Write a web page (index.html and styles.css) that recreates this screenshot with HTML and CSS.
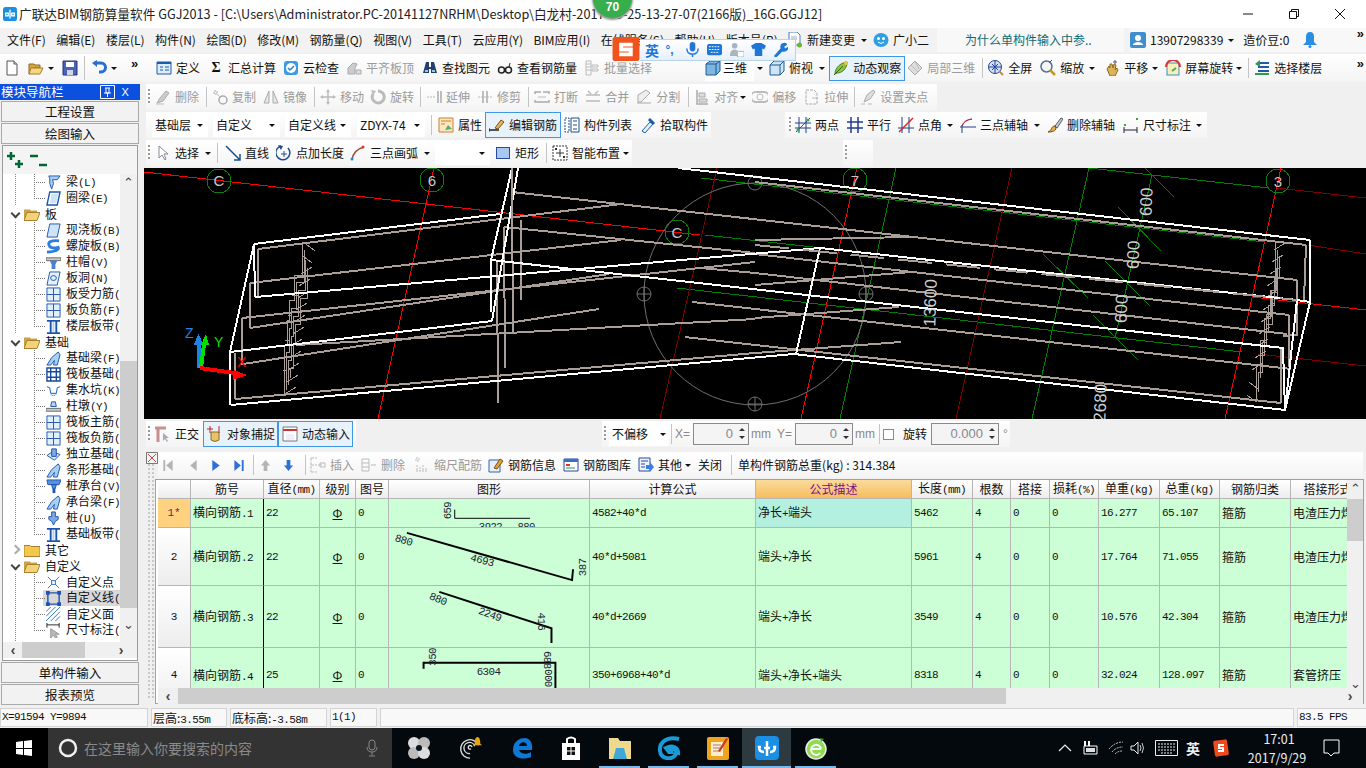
FILE: index.html
```html
<!DOCTYPE html>
<html lang="zh">
<head>
<meta charset="utf-8">
<title>广联达BIM钢筋算量软件 GGJ2013</title>
<link rel="stylesheet" href="styles.css">
</head>
<body>
<svg class="defs">
<symbol id="new" viewBox="0 0 16 16"><path d="M3 1h7l3 3v11H3z" fill="#fff" stroke="#555"/><path d="M10 1v3h3" fill="#ddd" stroke="#555"/></symbol>
<symbol id="open" viewBox="0 0 16 16"><path d="M1 4h5l1 1h5v3H5L2 14H1z" fill="#d9a441" stroke="#8a6a20"/><path d="M3 8h12l-3 6H1z" fill="#f6d77c" stroke="#a57f2a"/></symbol>
<symbol id="save" viewBox="0 0 16 16"><path d="M1 1h14v14H1z" fill="#4a63b8" stroke="#24357f"/><path d="M4 2h8v5H4z" fill="#fff"/><path d="M5 10h6v5H5z" fill="#cfd6e8"/></symbol>
<symbol id="undo" viewBox="0 0 16 16"><path d="M3 3h7a4 4 0 0 1 0 9H8" fill="none" stroke="#2a6fd0" stroke-width="3"/><path d="M6 0v7L1 3z" fill="#2a6fd0"/></symbol>
<symbol id="def" viewBox="0 0 16 16"><path d="M1 2h14v12H1z" fill="#dcecf9" stroke="#1d5ca8"/><path d="M1 2h14v2H1z" fill="#1d5ca8"/><path d="M4 7h3M4 10h3M9 7h4M9 10h4" stroke="#1d5ca8"/></symbol>
<symbol id="cloud" viewBox="0 0 16 16"><rect x="1" y="1" width="14" height="14" rx="3" fill="#3d9be6"/><circle cx="8" cy="8" r="5" fill="#fff"/><path d="M5 8l2 2 4-4" fill="none" stroke="#2a7fc8" stroke-width="1.5"/></symbol>
<symbol id="flat" viewBox="0 0 16 16"><path d="M2 14V8l5-5 4 1-2 4v6z" fill="#ccc" stroke="#aaa"/><path d="M10 10h5v4h-5z" fill="#ddd" stroke="#aaa"/></symbol>
<symbol id="binoc" viewBox="0 0 16 16"><path d="M4 2h3v5h2V2h3l3 11H9V9H7v4H1z" fill="#24406f"/><path d="M3 10h3v2H3zM10 10h3v2h-3z" fill="#9cc"/></symbol>
<symbol id="glass" viewBox="0 0 16 16"><circle cx="4.500" cy="10" r="3" fill="none" stroke="#222" stroke-width="1.500"/><circle cx="11.500" cy="10" r="3" fill="none" stroke="#222" stroke-width="1.500"/><path d="M12 7l1-4" stroke="#222"/></symbol>
<symbol id="batch" viewBox="0 0 16 16"><path d="M2 1h5v14H2zM8 5h6v2H8zM8 9h6v2H8zM2 4h5M2 7h5M2 10h5" fill="none" stroke="#bbb"/></symbol>
<symbol id="cube" viewBox="0 0 16 16"><path d="M1 4l4-3h10v10l-4 4H1z" fill="#7fb5e0" stroke="#1b5a93"/><path d="M1 4h10v11M11 4l4-3" fill="none" stroke="#1b5a93"/></symbol>
<symbol id="top" viewBox="0 0 16 16"><path d="M1 5l4-4h10v10l-4 4H1z" fill="#cfe3f4" stroke="#1b5a93"/><path d="M1 5h10v10M11 5l4-4" fill="none" stroke="#1b5a93"/></symbol>
<symbol id="orbit" viewBox="0 0 16 16"><path d="M2 14C2 8 7 3 14 2c0 7-5 11-10 11z" fill="#8cc63f" stroke="#4c7f1b"/><circle cx="13" cy="3" r="2" fill="#e6c33c"/><path d="M1 15l9-9" stroke="#2f5f10"/></symbol>
<symbol id="local" viewBox="0 0 16 16"><path d="M1 8l7-7 7 7-7 7z" fill="#ddd" stroke="#aaa"/><path d="M4 5l7 7M8 1l4 8" stroke="#bbb"/></symbol>
<symbol id="globe" viewBox="0 0 16 16"><circle cx="7" cy="7" r="6.500" fill="#d4e2f7" stroke="#23419a"/><path d="M7 1v12M1 7h12M4 4l6 6M10 4l-6 6" stroke="#23419a" fill="none"/><path d="M11 11l4 4" stroke="#d08a1c" stroke-width="2"/></symbol>
<symbol id="zoomi" viewBox="0 0 16 16"><circle cx="6.500" cy="6.500" r="5.500" fill="#f3f7fb" stroke="#5a6f85" stroke-width="1.500"/><path d="M10 10l5 5" stroke="#c59a1a" stroke-width="2.500"/><path d="M9 3l3-3" stroke="#456"/></symbol>
<symbol id="hand" viewBox="0 0 16 16"><path d="M3 9l2-3 1 2V4l2 0 1 4 1-4 2 1-1 5 2-2 1 2-3 6H6z" fill="#dcb35a" stroke="#8a6a20"/><path d="M11 0v4M9 2h4" stroke="#4a5f90"/></symbol>
<symbol id="rot" viewBox="0 0 16 16"><rect x="2" y="3" width="12" height="12" fill="#f6f0c0" stroke="#3a8fc0"/><path d="M1 7a7 7 0 0 1 14 0" fill="none" stroke="#d33" stroke-width="2"/><path d="M7 11l4-3" stroke="#5a5" stroke-width="2"/></symbol>
<symbol id="floor" viewBox="0 0 16 16"><path d="M4 3h11M4 7h11M4 11h11" stroke="#1d5ca8" stroke-width="2"/><path d="M1 14h14" stroke="#2a9d48" stroke-width="2"/><path d="M6 0L1 4l5 3z" fill="#2a9d48"/></symbol>
<symbol id="doc" viewBox="0 0 16 16"><path d="M2 0h8l3 3v10H2z" fill="#fff" stroke="#4a7fc0"/><path d="M4 5h6M4 7h6M4 9h4" stroke="#9ab"/><circle cx="12.500" cy="13" r="2.500" fill="#6cb52d"/></symbol>
<symbol id="bot" viewBox="0 0 16 16"><ellipse cx="8" cy="8" rx="7.500" ry="7" fill="#2f9fe3"/><circle cx="5.500" cy="6.500" r="1.500" fill="#fff"/><circle cx="10.500" cy="6.500" r="1.500" fill="#fff"/><path d="M5 10q3 3 6 0" stroke="#fff" fill="none"/></symbol>
<symbol id="user" viewBox="0 0 16 16"><rect width="16" height="16" rx="2" fill="#3f8fd0"/><circle cx="8" cy="6" r="3" fill="#fff"/><path d="M3 13h10v-1q-5-4-10 0z" fill="#fff"/></symbol>
<symbol id="bell" viewBox="0 0 16 16"><path d="M8 0q4 0 4 5l0 5 3 3H1l3-3V5q0-5 4-5z" fill="#2a8fe3"/><circle cx="8" cy="14.500" r="1.500" fill="#2a8fe3"/></symbol>
<symbol id="del" viewBox="0 0 16 16"><path d="M2 14l3-5 6-7 3 2-6 8z" fill="#ccc" stroke="#aaa"/><path d="M1 15h8" stroke="#bbb"/></symbol>
<symbol id="copy" viewBox="0 0 16 16"><path d="M2 2h3v3H2z" fill="none" stroke="#aaa" stroke-dasharray="2 1"/><circle cx="11" cy="11" r="4" fill="none" stroke="#aaa" stroke-width="1.500"/><path d="M5 5l4 4" stroke="#bbb"/></symbol>
<symbol id="mirror" viewBox="0 0 16 16"><path d="M1 14L6 2v12zM15 14L10 2v12z" fill="#e8e8e8" stroke="#aaa"/></symbol>
<symbol id="move" viewBox="0 0 16 16"><path d="M8 0l2 3H6zM8 16l-2-3h4zM0 8l3-2v4zM16 8l-3 2V6z" fill="#bbb"/><path d="M8 3v10M3 8h10" stroke="#bbb" stroke-width="1.500"/></symbol>
<symbol id="spin" viewBox="0 0 16 16"><path d="M8 2a6 6 0 1 1-5 3" fill="none" stroke="#bbb" stroke-width="3"/><path d="M1 1l5 1-3 4z" fill="#bbb"/></symbol>
<symbol id="extend" viewBox="0 0 16 16"><path d="M1 8h9" stroke="#bbb" stroke-dasharray="2 1"/><path d="M12 2v12M15 2v12" stroke="#aaa" stroke-width="1.500"/></symbol>
<symbol id="trim" viewBox="0 0 16 16"><path d="M1 8h14" stroke="#bbb" stroke-dasharray="2 1"/><path d="M6 2v12M10 2v12" stroke="#aaa" stroke-width="1.500"/></symbol>
<symbol id="brk" viewBox="0 0 16 16"><path d="M1 5v-2h6M15 5v-2H9M1 11v2h14v-2" fill="none" stroke="#aaa" stroke-width="1.500"/><path d="M4 8h8" stroke="#bbb"/></symbol>
<symbol id="merge" viewBox="0 0 16 16"><path d="M1 6h14M1 12h14M3 2l3 3M13 2l-3 3" fill="none" stroke="#bbb" stroke-width="1.500"/></symbol>
<symbol id="split" viewBox="0 0 16 16"><path d="M1 14h14M2 13V6l8-5 4 3-9 9z" fill="#eee" stroke="#aaa"/></symbol>
<symbol id="align" viewBox="0 0 16 16"><path d="M3 1v14h11" fill="none" stroke="#aaa" stroke-width="1.500"/><path d="M5 4h6v4H5zM5 10h8v3H5z" fill="#ddd" stroke="#aaa"/></symbol>
<symbol id="offset" viewBox="0 0 16 16"><path d="M3 13a5 5 0 0 1 2-10h6a5 5 0 0 1 2 10z" fill="none" stroke="#bbb" stroke-width="2"/><circle cx="8" cy="8" r="3" fill="none" stroke="#bbb"/></symbol>
<symbol id="stretch" viewBox="0 0 16 16"><path d="M2 1h8l3 3v11H2z" fill="#fafafa" stroke="#aaa" stroke-dasharray="3 1"/><path d="M8 9h6" stroke="#bbb"/></symbol>
<symbol id="grip" viewBox="0 0 16 16"><path d="M1 15h4M8 15h4" stroke="#bbb"/><path d="M4 13l3-7 6-5 2 2-5 7z" fill="#ddd" stroke="#aaa"/></symbol>
<symbol id="prop" viewBox="0 0 16 16"><path d="M1 1h14v14H1z" fill="#fde6c2" stroke="#c9822a"/><path d="M3 4h10M3 7h4" stroke="#c9822a"/><path d="M7 13l3-5 4 4z" fill="#5a7"/></symbol>
<symbol id="edit" viewBox="0 0 16 16"><path d="M0 13h10" stroke="#222" stroke-width="1.500"/><path d="M6 11l6-8 3 2-6 7z" fill="#e3b45a" stroke="#7a5210"/><path d="M0 11v4" stroke="#222"/></symbol>
<symbol id="list" viewBox="0 0 16 16"><path d="M1 1h4v14H1z" fill="#fff" stroke="#1d4f8f" stroke-dasharray="2 1"/><path d="M7 1h8v14H7z" fill="#fff" stroke="#1d4f8f"/><path d="M9 4h4M9 8h4M9 12h4" stroke="#1d4f8f"/></symbol>
<symbol id="pick" viewBox="0 0 16 16"><path d="M2 14l8-9 3 2-8 9z" fill="#e6eef8" stroke="#1d5ca8"/><path d="M9 2l5 5" stroke="#1d5ca8" stroke-width="3"/></symbol>
<symbol id="twopt" viewBox="0 0 16 16"><path d="M4 0v16M11 0v16M0 6h16M0 11h16" stroke="#223c8f"/><path d="M1 15L15 1" stroke="#b22"/><circle cx="3" cy="13" r="1.500" fill="#3a3"/><circle cx="13" cy="3" r="1.500" fill="#3a3"/></symbol>
<symbol id="para" viewBox="0 0 16 16"><path d="M4 0v16M11 0v16M0 5h16M0 11h16" stroke="#223c8f" stroke-width="1.500"/></symbol>
<symbol id="ang" viewBox="0 0 16 16"><path d="M4 0v16M11 0v16M0 11h16" stroke="#223c8f"/><path d="M1 15L15 1" stroke="#d22" stroke-width="1.500"/></symbol>
<symbol id="arc3" viewBox="0 0 16 16"><path d="M2 16V8M0 10h16M2 9q2-6 10-7" fill="none" stroke="#223c8f"/><path d="M2 9q2-6 10-7" fill="none" stroke="#d22"/></symbol>
<symbol id="erase" viewBox="0 0 16 16"><path d="M1 15c4-1 3-6 7-6l1 2c0 3-4 4-8 4z" fill="#e6b04a" stroke="#6a4a10"/><path d="M8 9l6-8 2 1-6 9z" fill="#c5cfdc" stroke="#556"/></symbol>
<symbol id="dim" viewBox="0 0 16 16"><path d="M1 10v6M14 10v6M1 13h13" stroke="#223" fill="none"/><path d="M1 7h2v2H1zM13 1h2v2h-2z" fill="#3a3"/></symbol>
<symbol id="sel" viewBox="0 0 16 16"><path d="M4 1v12l3-3 3 5 1-1-2-5h4z" fill="#fff" stroke="#889"/></symbol>
<symbol id="line" viewBox="0 0 16 16"><path d="M1 1l14 14M15 9v6H9" fill="none" stroke="#1d4f8f" stroke-width="1.500"/></symbol>
<symbol id="ptlen" viewBox="0 0 16 16"><path d="M5 1a7 7 0 1 0 7 2" fill="none" stroke="#1d4f8f" stroke-width="1.500"/><path d="M5 9h6M8 6v6" stroke="#1d4f8f"/><path d="M2 0l5 1-2 4z" fill="#1d4f8f"/></symbol>
<symbol id="arc" viewBox="0 0 16 16"><path d="M2 15Q3 5 14 2" fill="none" stroke="#9b4a3a" stroke-width="1.500"/><circle cx="2" cy="14" r="1.500" fill="#1d8fd0"/><circle cx="13" cy="2" r="1.500" fill="#d33"/></symbol>
<symbol id="rect" viewBox="0 0 16 16"><rect x="1.500" y="2.500" width="13" height="11" fill="#a8c8f0" stroke="#27499f"/></symbol>
<symbol id="smart" viewBox="0 0 16 16"><path d="M1 1h14v14H1z" fill="#fff" stroke="#333" stroke-dasharray="2 1"/><path d="M8 4v8M4 8h8" stroke="#333"/><path d="M3 3h2v2H3zM11 11h2v2h-2z" fill="#333"/></symbol>
<symbol id="ortho" viewBox="0 0 16 16"><path d="M0 2h11M3 2v14" stroke="#c98e8e" stroke-width="3"/><path d="M8 7v8l2-2 2 3 1-1-2-3h3z" fill="#aab"/></symbol>
<symbol id="snap" viewBox="0 0 16 16"><path d="M3 0v7M0 3h6" stroke="#b22"/><path d="M4 6h8v8q-4 3-8 0z" fill="#e6c36a" stroke="#8a6a20"/><path d="M12 0v7" stroke="#b22"/></symbol>
<symbol id="dyn" viewBox="0 0 16 16"><path d="M1 1h14v14H1z" fill="#fff" stroke="#777"/><path d="M1 4h14" stroke="#c33" stroke-width="2"/><path d="M4 8h8v6H4z" fill="#eef"/></symbol>
<symbol id="insert" viewBox="0 0 16 16"><path d="M1 1h6M1 15h6M1 8h6M1 1v14" stroke="#bbb" fill="none" stroke-dasharray="3 1"/><path d="M8 8h4M10 6h5v4h-5z" stroke="#bbb" fill="none"/></symbol>
<symbol id="remove" viewBox="0 0 16 16"><path d="M1 2h7v12H1zM1 6h7M1 10h7M10 8h5" stroke="#bbb" fill="none"/></symbol>
<symbol id="scale" viewBox="0 0 16 16"><path d="M2 1h3v3H2zM2 14l12 0M3 8v6M6 10v4M9 8v6M12 11v3" stroke="#bbb" fill="none" stroke-dasharray="2 1"/></symbol>
<symbol id="info" viewBox="0 0 16 16"><path d="M1 3h11v12H1z" fill="#e7effb" stroke="#2a63b8"/><path d="M6 11l6-9 3 2-6 8z" fill="#e3a23c" stroke="#7a5210"/></symbol>
<symbol id="lib" viewBox="0 0 16 16"><path d="M1 2h14v12H1z" fill="#fff" stroke="#27499f"/><path d="M1 2h14v3H1z" fill="#3a6fc8"/><path d="M3 7h4v2H3z" fill="#d33"/><path d="M3 11h9" stroke="#3a8f3a"/></symbol>
<symbol id="other" viewBox="0 0 16 16"><path d="M1 1h11v13H1z" fill="#eef3fb" stroke="#27499f"/><path d="M3 4h7M3 7h4M3 10h4" stroke="#27499f"/><path d="M8 8h4V5l4 5-4 5v-3H8z" fill="#3a7fe0"/></symbol>
<symbol id="beam" viewBox="0 0 16 16"><path d="M3 1h12l-3 4H7l1 4-2 6-2-6 0-5z" fill="#a9cff0" stroke="#1c55b0"/></symbol>
<symbol id="ring" viewBox="0 0 16 16"><path d="M4 1h11l-3 14H1z" fill="#fff" stroke="#1c55b0" stroke-width="1.500"/><path d="M6 3h7l-2 10H4z" fill="#cfe3f7"/></symbol>
<symbol id="slab" viewBox="0 0 16 16"><path d="M4 1h11l-3 14H1z" fill="#cfe3f7" stroke="#1c55b0"/></symbol>
<symbol id="spiral" viewBox="0 0 16 16"><path d="M14 2Q2 1 3 6t10 3q2 4-12 5" fill="none" stroke="#2a7fe0" stroke-width="3"/></symbol>
<symbol id="cap" viewBox="0 0 16 16"><path d="M0 3h16v3H0z" fill="#ccc" stroke="#666"/><path d="M4 6h8l-2 4H6zM6 10h4v5H6z" fill="#4a80d8"/></symbol>
<symbol id="hole" viewBox="0 0 16 16"><path d="M4 1h11l-3 14H1z" fill="#e7f0fa" stroke="#1c55b0"/><rect x="5" y="5" width="6" height="5" rx="2.500" fill="none" stroke="#1c55b0"/></symbol>
<symbol id="gridp" viewBox="0 0 16 16"><path d="M1 1h14v14H1z" fill="#e4eefa" stroke="#1c55b0"/><path d="M1 8h14M8 1v14" stroke="#1c55b0"/></symbol>
<symbol id="band" viewBox="0 0 16 16"><path d="M1 2h14M1 15h14" stroke="#1c55b0" stroke-width="2"/><path d="M5 2v13M11 2v13" stroke="#1c55b0" stroke-width="2"/><path d="M7 3h2v11H7z" fill="#b9d2f0"/></symbol>
<symbol id="fbeam" viewBox="0 0 16 16"><path d="M1 15l5-8 7-6 2 3-3 11H8l1-5-4 5z" fill="#a9cff0" stroke="#1c55b0"/></symbol>
<symbol id="raft" viewBox="0 0 16 16"><path d="M1 1h14v14H1zM5 1v14M11 1v14M1 5h14M1 11h14" fill="none" stroke="#174a9f" stroke-width="1.500"/></symbol>
<symbol id="pit" viewBox="0 0 16 16"><path d="M1 4l3 1 1 6h6l1-6 3-1" fill="none" stroke="#1c55b0"/><path d="M5 12q3 3 6 0" fill="#cfe3f7" stroke="#1c55b0" stroke-dasharray="1 1"/></symbol>
<symbol id="pier" viewBox="0 0 16 16"><path d="M6 3h4l1 5H5z" fill="#b9d2f0" stroke="#1c55b0"/><path d="M0 10h16v3H0z" fill="#ccc" stroke="#666"/></symbol>
<symbol id="iso" viewBox="0 0 16 16"><path d="M1 9l6-4 8 3-6 6z" fill="#dbe8f6" stroke="#1c55b0"/><path d="M6 2h5v8H6z" fill="#7fa8e0" stroke="#1c55b0"/></symbol>
<symbol id="capb" viewBox="0 0 16 16"><path d="M1 1h15l-2 5H2zM6 6h5l-1 4H7z" fill="#5a8fe0" stroke="#1c55b0"/><path d="M7 10h3v5H7z" fill="#1c55b0"/></symbol>
<symbol id="pile" viewBox="0 0 16 16"><path d="M6 1h4v5h3v3l-3 2-2 4-2-4-3-2V6h3z" fill="#7fa8e0" stroke="#1c55b0"/></symbol>
<symbol id="cpt" viewBox="0 0 16 16"><path d="M2 2l12 12M14 2L2 14" stroke="#2a70c8"/><rect x="6" y="6" width="4" height="4" fill="#fff" stroke="#2a70c8"/></symbol>
<symbol id="cln" viewBox="0 0 16 16"><path d="M2 2h12v12H2z" fill="none" stroke="#1c55b0" stroke-width="1.500"/><path d="M0 0h4v4H0zM12 0h4v4h-4zM0 12h4v4H0zM12 12h4v4h-4z" fill="#1c55b0"/></symbol>
<symbol id="cfc" viewBox="0 0 16 16"><path d="M0 5L5 0M0 10L10 0M0 15L15 0M5 15L15 5M10 15l5-5" stroke="#2a70c8"/></symbol>
<symbol id="cdim" viewBox="0 0 16 16"><path d="M1 0v5M14 0v5M1 2h13" stroke="#222"/><path d="M5 6v10l3-3 2 3 2-1-2-3h4z" fill="#b8b8b8" stroke="#999"/></symbol>
</svg>

<div class="app">
  <header class="title">
    <svg class="logo" viewBox="0 0 16 16"><rect width="16" height="16" rx="3" fill="#1a8fe3"/><path d="M8 3v10M3 7h3v3H3zM10 7h3v3h-3z" fill="none" stroke="#fff" stroke-width="1.500"/></svg>
    <span class="title-text">广联达BIM钢筋算量软件 GGJ2013 - [C:\Users\Administrator.PC-20141127NRHM\Desktop\白龙村-2017-09-25-13-27-07(2166版)_16G.GGJ12]</span>
    <div class="winbtns">
      <svg viewBox="0 0 12 12"><path d="M1 6h10" stroke="#111"/></svg>
      <svg viewBox="0 0 12 12"><path d="M1.500 3.500h7v7h-7zM3.500 3V1.500h7v7H9" fill="none" stroke="#111"/></svg>
      <svg viewBox="0 0 12 12"><path d="M1 1l10 10M11 1L1 11" stroke="#111"/></svg>
    </div>
  </header>

  <nav class="menu">
    <div class="menu-items"><span>文件(F)</span><span>编辑(E)</span><span>楼层(L)</span><span>构件(N)</span><span>绘图(D)</span><span>修改(M)</span><span>钢筋量(Q)</span><span>视图(V)</span><span>工具(T)</span><span>云应用(Y)</span><span>BIM应用(I)</span><span>在线服务(S)</span><span>帮助(H)</span><span>版本号(B)</span></div>
    <div class="t mr6"><svg class="i"><use href="#doc"/></svg><span>新建变更</span></div><i class="d mr6"></i>
    <div class="t mr7"><svg class="i"><use href="#bot"/></svg><span>广小二</span></div>
    <div class="ask">为什么单构件输入中参..</div>
    <div class="account">
      <svg class="i"><use href="#user"/></svg><span class="phone">13907298339</span><i class="d"></i><span class="bean">造价豆:0</span><svg class="i"><use href="#bell"/></svg><span class="more">»</span>
    </div>
  </nav>

  <div class="toprow">
    <div class="file-tb">
      <svg class="i"><use href="#new"/></svg>
      <svg class="i icon-open"><use href="#open"/></svg><i class="d tight"></i>
      <svg class="i icon-save"><use href="#save"/></svg><i class="s sep-save"></i>
      <svg class="i"><use href="#undo"/></svg><i class="d tight"></i>
      <span class="more more-file">»</span>
    </div>
    <div class="tb tb-main">
      <div class="t mr8"><svg class="i"><use href="#def"/></svg><span>定义</span></div>
      <div class="t"><span class="i sigma">Σ</span><span>汇总计算</span></div>
      <div class="t"><svg class="i"><use href="#cloud"/></svg><span>云检查</span></div>
      <div class="t mr8 off"><svg class="i"><use href="#flat"/></svg><span>平齐板顶</span></div>
      <div class="t"><svg class="i"><use href="#binoc"/></svg><span>查找图元</span></div>
      <div class="t"><svg class="i"><use href="#glass"/></svg><span>查看钢筋量</span></div>
      <div class="t off mr53"><svg class="i"><use href="#batch"/></svg><span>批量选择</span></div>
      <div class="t threed"><svg class="i"><use href="#cube"/></svg><span>三维</span></div><i class="d"></i>
      <div class="t mr0"><svg class="i"><use href="#top"/></svg><span>俯视</span></div><i class="d ml6 mr4"></i>
      <div class="t active mr2"><svg class="i"><use href="#orbit"/></svg><span>动态观察</span></div>
      <div class="t off"><svg class="i"><use href="#local"/></svg><span>局部三维</span></div><i class="s"></i>
      <div class="t mr8"><svg class="i"><use href="#globe"/></svg><span>全屏</span></div>
      <div class="t mr0"><svg class="i"><use href="#zoomi"/></svg><span>缩放</span></div><i class="d ml5 mr9"></i>
      <div class="t mr0"><svg class="i"><use href="#hand"/></svg><span>平移</span></div><i class="d ml4 mr7"></i>
      <div class="t mr0"><svg class="i"><use href="#rot"/></svg><span>屏幕旋转</span></div><i class="d ml3 mr6"></i><i class="s"></i>
      <div class="t"><svg class="i"><use href="#floor"/></svg><span>选择楼层</span></div>
      <span class="more more-end">»</span>
    </div>
  </div>

  <div class="body">
    <aside class="left">
      <div class="nav-head"><span>模块导航栏</span><svg class="pin" viewBox="0 0 15 14"><path d="M.500.500h14v13H.500z" fill="none" stroke="#fff"/><path d="M5 3h5M6 3v5h3V3M4 8h7M7.500 8v4" fill="none" stroke="#fff"/></svg><i class="x">X</i></div>
      <div class="nav-btn">工程设置</div>
      <div class="nav-btn">绘图输入</div>
      <div class="tree-frame">
        <div class="tree-tools">
          <svg class="ti" viewBox="0 0 18 16"><path d="M4 0v8M0 4h8M12 8v8M8 12h8" stroke="#063" stroke-width="2.500"/></svg>
          <svg class="ti" viewBox="0 0 18 16"><path d="M0 4h8M9 13h8" stroke="#063" stroke-width="2.500"/></svg>
        </div>
        <div class="tree-mid">
          <div class="tree">
            <div class="leaf"><i class="con"></i><svg class="i"><use href="#beam"/></svg><span>梁<b class="m">(L)</b></span></div>
            <div class="leaf"><i class="con last"></i><svg class="i"><use href="#ring"/></svg><span>圈梁<b class="m">(E)</b></span></div>
            <div class="grp"><i class="chev"></i><svg class="fold" viewBox="0 0 16 12"><path d="M0 1h6l1 1h6v2H4L1 11H0z" fill="#c9a24a"/><path d="M3 4h13l-3 8H0z" fill="#f4d27a" stroke="#a5802f"/></svg><span>板</span></div>
            <div class="leaf"><i class="con"></i><svg class="i"><use href="#slab"/></svg><span>现浇板<b class="m">(B)</b></span></div>
            <div class="leaf"><i class="con"></i><svg class="i"><use href="#spiral"/></svg><span>螺旋板<b class="m">(B)</b></span></div>
            <div class="leaf"><i class="con"></i><svg class="i"><use href="#cap"/></svg><span>柱帽<b class="m">(V)</b></span></div>
            <div class="leaf"><i class="con"></i><svg class="i"><use href="#hole"/></svg><span>板洞<b class="m">(N)</b></span></div>
            <div class="leaf"><i class="con"></i><svg class="i"><use href="#gridp"/></svg><span>板受力筋<b class="m">(</b></span></div>
            <div class="leaf"><i class="con"></i><svg class="i"><use href="#gridp"/></svg><span>板负筋<b class="m">(F)</b></span></div>
            <div class="leaf"><i class="con last"></i><svg class="i"><use href="#band"/></svg><span>楼层板带<b class="m">(</b></span></div>
            <div class="grp"><i class="chev"></i><svg class="fold" viewBox="0 0 16 12"><path d="M0 1h6l1 1h6v2H4L1 11H0z" fill="#c9a24a"/><path d="M3 4h13l-3 8H0z" fill="#f4d27a" stroke="#a5802f"/></svg><span>基础</span></div>
            <div class="leaf"><i class="con"></i><svg class="i"><use href="#fbeam"/></svg><span>基础梁<b class="m">(F)</b></span></div>
            <div class="leaf"><i class="con"></i><svg class="i"><use href="#raft"/></svg><span>筏板基础<b class="m">(</b></span></div>
            <div class="leaf"><i class="con"></i><svg class="i"><use href="#pit"/></svg><span>集水坑<b class="m">(K)</b></span></div>
            <div class="leaf"><i class="con"></i><svg class="i"><use href="#pier"/></svg><span>柱墩<b class="m">(Y)</b></span></div>
            <div class="leaf"><i class="con"></i><svg class="i"><use href="#gridp"/></svg><span>筏板主筋<b class="m">(</b></span></div>
            <div class="leaf"><i class="con"></i><svg class="i"><use href="#gridp"/></svg><span>筏板负筋<b class="m">(</b></span></div>
            <div class="leaf"><i class="con"></i><svg class="i"><use href="#iso"/></svg><span>独立基础<b class="m">(</b></span></div>
            <div class="leaf"><i class="con"></i><svg class="i"><use href="#fbeam"/></svg><span>条形基础<b class="m">(</b></span></div>
            <div class="leaf"><i class="con"></i><svg class="i"><use href="#capb"/></svg><span>桩承台<b class="m">(V)</b></span></div>
            <div class="leaf"><i class="con"></i><svg class="i"><use href="#fbeam"/></svg><span>承台梁<b class="m">(F)</b></span></div>
            <div class="leaf"><i class="con"></i><svg class="i"><use href="#pile"/></svg><span>桩<b class="m">(U)</b></span></div>
            <div class="leaf"><i class="con last"></i><svg class="i"><use href="#band"/></svg><span>基础板带<b class="m">(</b></span></div>
            <div class="grp"><i class="chev closed"></i><svg class="fold" viewBox="0 0 16 12"><path d="M0 1h6l1 1h9v10H0z" fill="#f4c94a" stroke="#a5802f"/></svg><span>其它</span></div>
            <div class="grp"><i class="chev"></i><svg class="fold" viewBox="0 0 16 12"><path d="M0 1h6l1 1h6v2H4L1 11H0z" fill="#c9a24a"/><path d="M3 4h13l-3 8H0z" fill="#f4d27a" stroke="#a5802f"/></svg><span>自定义</span></div>
            <div class="leaf"><i class="con"></i><svg class="i"><use href="#cpt"/></svg><span>自定义点</span></div>
            <div class="leaf sel"><i class="con"></i><svg class="i"><use href="#cln"/></svg><span>自定义线<b class="m">(</b></span></div>
            <div class="leaf"><i class="con"></i><svg class="i"><use href="#cfc"/></svg><span>自定义面</span></div>
            <div class="leaf"><i class="con last"></i><svg class="i"><use href="#cdim"/></svg><span>尺寸标注<b class="m">(</b></span></div>
          </div>
          <div class="vscroll tree-v">
            <span class="arr">⌃</span><i class="thumb"></i><span class="arr arr-d">⌄</span>
          </div>
        </div>
        <div class="hscroll tree-h"><span class="harr">‹</span><i class="hthumb"></i><span class="harr harr-r">›</span></div>
      </div>
      <div class="nav-btn nb2">单构件输入</div>
      <div class="nav-btn">报表预览</div>
    </aside>

    <main class="right">
      <div class="tb tb2 off">
        <i class="g"></i>
        <div class="t"><svg class="i"><use href="#del"/></svg><span>删除</span></div><i class="s"></i>
        <div class="t"><svg class="i"><use href="#copy"/></svg><span>复制</span></div>
        <div class="t"><svg class="i"><use href="#mirror"/></svg><span>镜像</span></div><i class="s"></i>
        <div class="t mr6"><svg class="i"><use href="#move"/></svg><span>移动</span></div>
        <div class="t mr6"><svg class="i"><use href="#spin"/></svg><span>旋转</span></div><i class="s"></i>
        <div class="t"><svg class="i"><use href="#extend"/></svg><span>延伸</span></div>
        <div class="t"><svg class="i"><use href="#trim"/></svg><span>修剪</span></div><i class="s"></i>
        <div class="t"><svg class="i"><use href="#brk"/></svg><span>打断</span></div>
        <div class="t"><svg class="i"><use href="#merge"/></svg><span>合并</span></div>
        <div class="t mr8"><svg class="i"><use href="#split"/></svg><span>分割</span></div><i class="s"></i>
        <div class="t mr0"><svg class="i"><use href="#align"/></svg><span>对齐</span></div><i class="d ml2 mr6"></i>
        <div class="t mr8"><svg class="i"><use href="#offset"/></svg><span>偏移</span></div>
        <div class="t mr6"><svg class="i"><use href="#stretch"/></svg><span>拉伸</span></div><i class="s"></i>
        <div class="t mr0"><svg class="i"><use href="#grip"/></svg><span>设置夹点</span></div>
      </div>

      <div class="row3">
        <div class="tb tb3">
          <div class="combo c1"><span>基础层</span><i class="d"></i></div>
          <div class="combo c2"><span>自定义</span><i class="d"></i></div>
          <div class="combo c3"><span>自定义线</span><i class="d"></i></div>
          <div class="combo c4"><span>ZDYX-74</span><i class="d"></i></div>
          <i class="s s3"></i>
          <div class="t mr3"><svg class="i"><use href="#prop"/></svg><span>属性</span></div>
          <div class="t active mr3"><svg class="i"><use href="#edit"/></svg><span>编辑钢筋</span></div>
          <div class="t mr8"><svg class="i"><use href="#list"/></svg><span>构件列表</span></div>
          <div class="t mr0"><svg class="i"><use href="#pick"/></svg><span>拾取构件</span></div>
        </div>
        <div class="tb tb3b">
          <i class="g gb"></i>
          <div class="t mr8"><svg class="i"><use href="#twopt"/></svg><span>两点</span></div>
          <div class="t"><svg class="i"><use href="#para"/></svg><span>平行</span></div>
          <div class="t mr0"><svg class="i"><use href="#ang"/></svg><span>点角</span></div><i class="d ml5 mr7"></i>
          <div class="t mr0"><svg class="i"><use href="#arc3"/></svg><span>三点辅轴</span></div><i class="d ml6 mr7"></i>
          <div class="t mr8"><svg class="i"><use href="#erase"/></svg><span>删除辅轴</span></div>
          <div class="t mr0"><svg class="i"><use href="#dim"/></svg><span>尺寸标注</span></div><i class="d ml5"></i>
        </div>
      </div>

      <div class="row4">
        <div class="tb tb4">
          <i class="g"></i>
          <div class="t mr0"><svg class="i"><use href="#sel"/></svg><span>选择</span></div><i class="d ml6 mr6"></i><i class="s s4"></i>
          <div class="t"><svg class="i"><use href="#line"/></svg><span>直线</span></div>
          <div class="t mr6"><svg class="i"><use href="#ptlen"/></svg><span>点加长度</span></div>
          <div class="t mr0"><svg class="i"><use href="#arc"/></svg><span>三点画弧</span></div><i class="d ml6 mr5"></i>
          <div class="combo c5"><span></span><i class="d"></i></div>
          <div class="t"><svg class="i"><use href="#rect"/></svg><span>矩形</span></div><i class="s"></i>
          <div class="t mr0"><svg class="i"><use href="#smart"/></svg><span>智能布置</span></div><i class="d ml3"></i>
        </div>
        <div class="tb tb4b"><i class="g"></i></div>
      </div>

      <svg class="scene" viewBox="144 168 1222 251">
        <g class="gn">
          <path d="M896 168L840 419M1089 168L1032 419M1089 168L1269 188M1152 175L1115 338"/>
          <path d="M1145 168L1174 197M1118 207L1161 251M1043 254L1088 298M1105 261L1150 306M1093 315L1138 360"/>
          <path d="M701 178L1265 242M705 235L1265 297M677 288L1242 352"/>
        </g>
        <g class="dr">
          <path d="M717 168L660 419M1012 168L956 419M1277 188L1366 198M1308 245L1366 254M1258 354L1366 366"/>
        </g>
        <g class="rd">
          <path d="M144 172L700 235M1252 297L1366 310M434 168L378 419M857 168L801 419M1281 168L1225 419"/>
        </g>
        <g class="cir">
          <circle cx="755" cy="294" r="111"/><circle cx="644" cy="294" r="7"/><circle cx="755" cy="404" r="7"/><circle cx="866" cy="294" r="7"/><circle cx="755" cy="183" r="7"/>
          <path d="M637 294h14M644 287v14M748 404h14M755 397v14M859 294h14M866 287v14"/>
        </g>
        <g class="oct">
          <circle cx="219" cy="181" r="12"/><circle cx="432" cy="180" r="12"/><circle cx="677" cy="232" r="12"/><circle cx="855" cy="180" r="12"/><circle cx="1278" cy="181" r="12"/>
        </g>
        <g class="lbl">
          <text x="219" y="186">C</text><text x="432" y="186">6</text><text x="677" y="238">C</text><text x="855" y="186">7</text><text x="1278" y="187">3</text>
        </g>
        <g class="st">
          <path d="M285 394l11-7M287 382l11-7M288 370l11-7M290 358l11-7M291 346l11-7M293 334l11-7M294 322l11-7M296 310l11-7M298 298l11-7M299 286l11-7M301 274l11-7M303 256l9 7M306 244l9 7"/>
          <path d="M284 395V345H287V320H289V300H294V275H302V243"/>
          <path d="M286 390V352H289V328H291V308H296V282H304V250"/>
          <path d="M288 385V360H291V336H293V316H298V290H305V260"/>
          <path d="M290 378V368H293V344H295V324H300V298H307V268"/>
          <path d="M283 370H286M285 340H289M288 315H292M292 295H298M298 275H306"/>
          <path d="M1247 395l9 7M1249 382l9 7M1252 370l11-7M1255 358l11-7M1257 346l11-7M1259 334l11-7M1261 322l11-7M1263 310l11-7M1265 298l11-7M1267 286l11-7M1270 274l11-7M1272 262l11-7M1274 250l11-7"/>
          <path d="M1256 402V364H1260V340H1264V318H1270V290H1275V243"/>
          <path d="M1258 392V372H1262V346H1266V324H1272V296H1277V250"/>
          <path d="M1260 378V355H1264V332H1268V305H1274V278H1279V256"/>
          <path d="M1262 362V342H1266V314H1271V290H1276V268"/>
          <path d="M1258 365H1263M1262 340H1267M1266 316H1272M1270 292H1277M1275 268H1280"/>
        </g>
        <g class="bar">
          <path d="M258 249V297M258 249L621 204M512 192L1297 280M512 192L513 333"/>
          <path d="M250 283L621 240M250 283V328M250 328L609 274M242 318L755 262M242 318V365M243 364L599 309"/>
          <path d="M235 353V399M235 399L755 353M755 353L901 342M504 227L505 368M497 262L498 403M521 220V300M504 227L755 253"/>
          <path d="M296 345L755 319M755 318L899 307M755 285L911 272M755 240L911 237M755 345L1281 403M1281 403V348"/>
          <path d="M755 182L1306 245M1306 245L1304 300M755 254L1289 315M1289 315V367M755 273L1287 334M755 309L1291 369M1297 280V335L1283 336M701 268L755 273M692 302L755 309M685 337L755 345"/>
        </g>
        <g class="wh">
          <path d="M254 244L500 214M254 244L230 352L230.500 405M230 352L492 321M230.500 405L794 354L1285 410L1310 302M1310 240V305"/>
          <path d="M254 244L255 297M255 297L820 248M820 248L796 354M491 260V312M491 260L1283 348L1285 410M678 168L1310 240M820 248L1297 300L1285 410M1297 300L1310 302"/>
          <path d="M512 168L491 260M518 168L492 321"/>
        </g>
        <path class="dash" d="M755 245L1297 300"/>
        <path class="stub" d="M512 168V240"/>
        <g class="dimt">
          <text transform="translate(1152 202) rotate(-88)">600</text>
          <text transform="translate(1139 255) rotate(-88)">600</text>
          <text transform="translate(1127 309) rotate(-88)">600</text>
          <text transform="translate(936 303) rotate(-88)">13600</text>
          <text transform="translate(1106 403) rotate(-88)">2680</text>
        </g>
        <g class="gizmo">
          <path class="gz-b" d="M198.500 368V344"/><path class="gz-bh" d="M198.500 334l5 11h-10z"/>
          <path class="gz-g" d="M201 368l3-24"/><path class="gz-gh" d="M206 334l3 11h-8z"/>
          <path class="gz-r" d="M200 368l34 5"/><path class="gz-rh" d="M247 375l-14 5 1-10z"/>
          <text class="tz" x="185" y="338">Z</text><text class="ty" x="214" y="347">Y</text><text class="tx" x="237" y="367">X</text>
        </g>
      </svg>

      <div class="row5">
        <div class="tb tb5">
          <i class="g"></i>
          <div class="t mr4"><svg class="i"><use href="#ortho"/></svg><span>正交</span></div>
          <div class="t active fix mr0"><svg class="i"><use href="#snap"/></svg><span>对象捕捉</span></div>
          <div class="t active fix mr0"><svg class="i"><use href="#dyn"/></svg><span>动态输入</span></div>
        </div>
        <div class="tb tb5b">
          <i class="g"></i>
          <div class="combo c6"><span>不偏移</span><i class="d"></i></div>
          <i class="s s5"></i>
          <span class="lab">X=</span>
          <div class="spin sp1"><span>0</span><i class="up"></i></div>
          <span class="lab ml2">mm</span>
          <span class="lab ml6">Y=</span>
          <div class="spin sp2"><span>0</span><i class="up"></i></div>
          <span class="lab ml2">mm</span>
          <i class="s s6"></i>
          <i class="check"></i>
          <span class="rot">旋转</span>
          <div class="spin sp3"><span>0.000</span><i class="up"></i></div>
          <span class="lab ml4">°</span>
        </div>
      </div>

      <div class="zone">
        <div class="strip">
          <svg class="strip-x" viewBox="0 0 12 12"><path d="M.500.500h11v11H.500z" fill="#f4f4f4" stroke="#777"/><path d="M2 2l8 8M10 2l-8 8" stroke="#c44"/></svg>
        </div>
        <div class="zone-main">
          <div class="tb tbg">
            <svg class="nv gray" viewBox="0 0 10 14"><path d="M0 1h2v12H0zM10 1v12L3 7z"/></svg>
            <svg class="nv gray n2" viewBox="0 0 10 14"><path d="M9 1v12L2 7z"/></svg>
            <svg class="nv blue n3" viewBox="0 0 10 14"><path d="M1 1v12l8-6z"/></svg>
            <svg class="nv blue n3" viewBox="0 0 10 14"><path d="M0 1v12l7-6zM8 1h2v12H8z"/></svg>
            <i class="s s7"></i>
            <svg class="nv gray n4" viewBox="0 0 12 14"><path d="M6 1l5 6H8v6H4V7H1z"/></svg>
            <svg class="nv blue n5" viewBox="0 0 12 14"><path d="M6 13L1 7h3V1h4v6h3z"/></svg>
            <i class="s s8"></i>
            <div class="t off"><svg class="i"><use href="#insert"/></svg><span>插入</span></div>
            <div class="t off mr9"><svg class="i"><use href="#remove"/></svg><span>删除</span></div>
            <div class="t off mr6"><svg class="i"><use href="#scale"/></svg><span>缩尺配筋</span></div>
            <div class="t"><svg class="i"><use href="#info"/></svg><span>钢筋信息</span></div>
            <div class="t"><svg class="i"><use href="#lib"/></svg><span>钢筋图库</span></div>
            <div class="t mr0"><svg class="i"><use href="#other"/></svg><span>其他</span></div><i class="d ml3 mr7"></i>
            <span class="close">关闭</span><i class="s s9"></i>
            <span class="total">单构件钢筋总重(kg) : 314.384</span>
          </div>
          <div class="gridframe">
            <div class="gridtop">
              <div class="gridview">
                <table class="rebar">
                  <colgroup><col class="k0"><col class="k1"><col class="k2"><col class="k3"><col class="k4"><col class="k5"><col class="k6"><col class="k7"><col class="k8"><col class="k9"><col class="k10"><col class="k11"><col class="k12"><col class="k13"><col class="k14"><col class="k15"></colgroup>
                  <thead><tr><th></th><th class="thick">筋号</th><th>直径<b class="m">(mm)</b></th><th>级别</th><th>图号</th><th>图形</th><th>计算公式</th><th class="hot">公式描述</th><th>长度<b class="m">(mm)</b></th><th>根数</th><th>搭接</th><th>损耗<b class="m">(%)</b></th><th>单重<b class="m">(kg)</b></th><th>总重<b class="m">(kg)</b></th><th>钢筋归类</th><th>搭接形式</th></tr></thead>
                  <tbody>
                    <tr class="h1">
                      <td class="no cur">1*</td><td class="thick">横向钢筋<b class="m">.1</b></td><td class="m">22</td><td class="ctr">Ф</td><td class="m">0</td>
                      <td class="fig"><svg viewBox="388 499 201 29"><path class="rb thinr" d="M453 510v9h78"/><text class="v" transform="translate(449 520) rotate(-90)">659</text><text x="478" y="531">3922</text><text x="518" y="531">880</text></svg></td>
                      <td class="m">4582+40*d</td><td class="desc">净长<b class="m">+</b>端头</td><td class="m">5462</td><td class="m">4</td><td class="m">0</td><td class="m">0</td><td class="m">16.277</td><td class="m">65.107</td><td>箍筋</td><td>电渣压力焊</td>
                    </tr>
                    <tr class="h2">
                      <td class="no">2</td><td class="thick">横向钢筋<b class="m">.2</b></td><td class="m">22</td><td class="ctr">Ф</td><td class="m">0</td>
                      <td class="fig"><svg viewBox="388 528 201 58"><path class="rb" d="M405 533L573 581L574 570"/><text class="v" transform="translate(392 541) rotate(17)">880</text><text class="v" transform="translate(469 561) rotate(15)">4693</text><text class="v" transform="translate(587 577) rotate(-90)">387</text></svg></td>
                      <td class="m">40*d+5081</td><td>端头<b class="m">+</b>净长</td><td class="m">5961</td><td class="m">4</td><td class="m">0</td><td class="m">0</td><td class="m">17.764</td><td class="m">71.055</td><td>箍筋</td><td>电渣压力焊</td>
                    </tr>
                    <tr class="h3">
                      <td class="no">3</td><td class="thick">横向钢筋<b class="m">.3</b></td><td class="m">22</td><td class="ctr">Ф</td><td class="m">0</td>
                      <td class="fig"><svg viewBox="388 586 201 62"><path class="rb" d="M438 592L552 629V644"/><text class="v" transform="translate(427 599) rotate(22)">880</text><text class="v" transform="translate(477 614) rotate(20)">2249</text><text class="v" transform="translate(538 613) rotate(90)">416</text></svg></td>
                      <td class="m">40*d+2669</td><td>端头<b class="m">+</b>净长</td><td class="m">3549</td><td class="m">4</td><td class="m">0</td><td class="m">0</td><td class="m">10.576</td><td class="m">42.304</td><td>箍筋</td><td>电渣压力焊</td>
                    </tr>
                    <tr class="h4">
                      <td class="no">4</td><td class="thick">横向钢筋<b class="m">.4</b></td><td class="m">25</td><td class="ctr">Ф</td><td class="m">0</td>
                      <td class="fig"><svg viewBox="388 648 201 62"><path class="rb" d="M422 669V663H556V710"/><text class="v" transform="translate(435 666) rotate(-90)">350</text><text class="v" x="476" y="675">6304</text><text class="v" transform="translate(544 651) rotate(90)">688</text><text class="v" transform="translate(553 688) rotate(-90)">000</text></svg></td>
                      <td class="m">350+6968+40*d</td><td>端头<b class="m">+</b>净长<b class="m">+</b>端头</td><td class="m">8318</td><td class="m">4</td><td class="m">0</td><td class="m">0</td><td class="m">32.024</td><td class="m">128.097</td><td>箍筋</td><td>套管挤压</td>
                    </tr>
                  </tbody>
                </table>
              </div>
              <div class="vscroll grid-v"><span class="arr">⌃</span><i class="thumb"></i><span class="arr arr-d">⌄</span></div>
            </div>
            <div class="hscroll grid-h"><span class="harr">‹</span><i class="hthumb"></i><span class="harr harr-r">›</span></div>
          </div>
        </div>
      </div>
    </main>
  </div>

  <footer class="status">
    <span class="st1">X=91594 Y=9894</span>
    <span class="st2">层高:<b class="m">3.55m</b></span>
    <span class="st3">底标高:<b class="m">-3.58m</b></span>
    <span class="st4">1(1)</span>
    <span class="st5"></span>
    <span class="st6">83.5 FPS</span>
  </footer>

  <div class="taskbar">
    <div class="start"><svg viewBox="0 0 16 16"><path d="M0 2l7-1v7H0zM8 1l8-1v8H8zM0 9h7v6l-7-1zM8 9h8v7l-8-1z" fill="#fff"/></svg></div>
    <div class="search">
      <svg class="cortana" viewBox="0 0 20 20"><circle cx="10" cy="10" r="8" fill="none" stroke="#eee" stroke-width="2.500"/></svg>
      <span>在这里输入你要搜索的内容</span>
      <svg class="mic" viewBox="0 0 12 18"><rect x="3" y="1" width="6" height="10" rx="3" fill="none" stroke="#888"/><path d="M1 8q0 5 5 5t5-5M6 13v3M3 17h6" fill="none" stroke="#888"/></svg>
    </div>
    <div class="apps">
      <div class="app-i"><svg viewBox="0 0 24 24"><circle cx="7" cy="7" r="6" fill="#ddd"/><circle cx="17" cy="7" r="6" fill="#bbb"/><circle cx="7" cy="17" r="6" fill="#bbb"/><circle cx="17" cy="17" r="6" fill="#ddd"/><circle cx="12" cy="12" r="3" fill="#08131a"/></svg></div>
      <div class="app-i"><svg viewBox="0 0 26 26"><path d="M12 24a10 10 0 1 1 9-14M12 19a6 6 0 1 1 5-8M13 14a2 2 0 1 1 1-2" fill="none" stroke="#ddd" stroke-width="1.500"/><path d="M17 8q0-7 3-7t3 7l2 2H15z" fill="#e6a417"/></svg></div>
      <div class="app-i"><svg viewBox="0 0 24 24"><path d="M3 14C3 5 10 2 15 2s8 5 7 12H9c1 4 8 5 12 2v5c-7 3-18 2-18-7zM9 10h8c0-5-7-5-8 0z" fill="#0f78d4"/></svg></div>
      <div class="app-i"><svg viewBox="0 0 24 24"><path d="M3 7h18v17H3z" fill="#fff"/><path d="M8 7V3q4-3 8 0v4" fill="none" stroke="#fff" stroke-width="2"/><path d="M8 11h3.500v3.500H8zM12.500 11H16v3.500h-3.500zM8 15.500h3.500V19H8zM12.500 15.500H16V19h-3.500z" fill="#111"/></svg></div>
      <div class="app-i open"><svg viewBox="0 0 24 24"><path d="M1 2h9l2 3h11v18H1z" fill="#f0d98c"/><path d="M8 12h8l3 11H5z" fill="#3fa9d8"/></svg></div>
      <div class="app-i open"><svg viewBox="0 0 24 24"><path d="M22 3C9 0 2 7 3 15s12 10 16 3c1-4-2-6-7-5l2 3h-2l-3-4c6-3 13-1 12 7" fill="none" stroke="#1b9ad8" stroke-width="4"/></svg></div>
      <div class="app-i open"><svg viewBox="0 0 24 24"><rect x="1" y="1" width="22" height="23" rx="2" fill="#f0a41e"/><path d="M5 6h12v14H5z" fill="#fbeed1"/><path d="M7 9h8M7 12h8M7 15h6" stroke="#a77"/><path d="M12 15l8-13 2 1-8 13z" fill="#c93a20"/></svg></div>
      <div class="app-i open active-app"><svg viewBox="0 0 24 24"><rect width="24" height="24" rx="4" fill="#1a8fe3"/><path d="M12 5v15M6 11H4q0 5 5 5M18 11h2q0 5-5 5M9 12h6" fill="none" stroke="#fff" stroke-width="2.500"/></svg></div>
      <div class="app-i open"><svg viewBox="0 0 24 24"><circle cx="12" cy="13" r="10" fill="#8fdc50" stroke="#eee" stroke-width="1.500"/><path d="M7 13h10M17 13a5 5 0 1 0-1 4" fill="none" stroke="#fff" stroke-width="2"/><path d="M16 2l4 1-3 3z" fill="#3a9d20"/></svg></div>
    </div>
    <div class="tray">
      <svg class="tr-a" viewBox="0 0 14 8"><path d="M1 7l6-6 6 6" fill="none" stroke="#eee" stroke-width="1.200"/></svg>
      <svg class="tr-b" viewBox="0 0 16 16"><path d="M1 6h13v8H1z" fill="none" stroke="#fff"/><path d="M3 8h9v4H3z" fill="#ddd"/><path d="M2 1v5M6 1v5" stroke="#fff" stroke-width="2"/></svg>
      <svg class="tr-c" viewBox="0 0 16 16"><path d="M1 9q6-7 14-7M4 12q4-5 11-5M7 14q3-3 7-3" fill="none" stroke="#ccc" stroke-dasharray="2 1"/></svg>
      <svg class="tr-d" viewBox="0 0 16 16"><path d="M1 6h3l4-4v12l-4-4H1z" fill="none" stroke="#eee"/><path d="M10 5q2 3 0 6M12 3q3 5 0 10" fill="none" stroke="#ccc"/></svg>
      <svg class="tr-e" viewBox="0 0 23 16"><path d="M.500.500h22v15H.500z" fill="none" stroke="#eee"/><path d="M3 4h17M3 7h17M3 10h17M6 13h11" stroke="#eee" stroke-dasharray="2 1"/></svg>
      <span class="tr-f">英</span>
      <svg class="tr-g" viewBox="0 0 16 18"><rect x="1" y="1" width="14" height="16" rx="2" fill="#ef4a1e" transform="rotate(-8 8 9)"/><path d="M11 6H6v3h4v3H5" fill="none" stroke="#fff" stroke-width="2"/></svg>
      <div class="clock"><span>17:01</span><span>2017/9/29</span></div>
      <svg class="tr-h" viewBox="0 0 18 18"><path d="M1 1h15v13h-5l-3 3-3-3H1z" fill="none" stroke="#fff"/></svg>
    </div>
  </div>

  <div class="badge"><span>70</span></div>

  <div class="ime">
    <svg class="ime-s" viewBox="0 0 28 26"><rect width="28" height="25" rx="3" fill="#f0541e"/><path d="M21 8H9v5h10v5H7" fill="none" stroke="#fff" stroke-width="4"/></svg>
    <div class="ime-body">
      <span class="ime-en">英</span><span class="ime-dot">°,</span>
      <svg class="ime-i" viewBox="0 0 16 16"><rect x="5" y="0" width="6" height="10" rx="3" fill="#1f76d6"/><path d="M2 7q0 6 6 6t6-6M8 13v3" fill="none" stroke="#1f76d6" stroke-width="1.500"/></svg>
      <svg class="ime-i" viewBox="0 0 16 16"><rect y="2" width="16" height="12" rx="2" fill="#1f76d6"/><path d="M2 5h12M2 8h12M4 11h8" stroke="#fff" stroke-dasharray="2 1"/></svg>
      <svg class="ime-i" viewBox="0 0 16 16"><circle cx="6" cy="4" r="3" fill="#a8b4c0"/><path d="M1 15q0-7 5-7t5 7z" fill="#a8b4c0"/><path d="M9 10h7v6H9z" fill="#fff" stroke="#a8b4c0"/></svg>
      <svg class="ime-i" viewBox="0 0 16 16"><path d="M5 1h6l5 3-2 4-2-1v8H4V7L2 8 0 4z" fill="#1f76d6"/></svg>
      <svg class="ime-i" viewBox="0 0 16 16"><path d="M1 15l7-8q-1-5 3-6t4 2l-3 2 1 2 3-2q1 4-3 5-3 1-3 0l-7 7z" fill="#1f76d6"/></svg>
    </div>
  </div>
</div>
</body>
</html>
```

FILE: styles.css
```css
* { box-sizing: border-box; }
html, body { margin: 0; padding: 0; }
body { width: 1366px; height: 768px; overflow: hidden; font: 12px/16px "Noto Sans CJK SC", "Liberation Sans", sans-serif; color: #111; background: #f0f0f0; }
.defs { display: none; }
i, b { font-style: normal; font-weight: normal; }
.app { position: relative; display: flex; flex-direction: column; width: 1366px; height: 768px; overflow: hidden; }

/* title */
.title { display: flex; align-items: center; height: 28px; background: #fff; padding-left: 3px; }
.logo { width: 14px; height: 16px; flex: none; }
.title-text { margin-left: 2px; font-size: 12.680px; white-space: nowrap; font-family: "Noto Sans CJK SC", sans-serif; color: #222; }
.winbtns { margin-left: auto; display: flex; gap: 34px; padding-right: 20px; }
.winbtns svg { width: 12px; height: 12px; }

/* menu */
.menu { display: flex; align-items: center; height: 24px; padding-left: 7px; background: #f2f2f2; white-space: nowrap; }
.menu-items { display: flex; gap: 10.500px; width: 780px; flex: none; overflow: hidden; }
.ask { flex: none; width: 187px; margin-left: 1px; height: 24px; line-height: 24px; background: #f8f8f8; color: #0d6b73; padding-left: 28px; margin-right: 6px; }
.account { display: flex; align-items: center; flex: 1; height: 24px; background: #f8f8f8; }
.phone { margin-left: 4px; margin-right: 5px; }
.bean { margin-left: 9px; margin-right: 13px; }
.more { font-family: "Liberation Sans", sans-serif; font-weight: bold; font-size: 13px; line-height: 12px; align-self: flex-start; }
.account .more { margin-left: auto; padding-right: 2px; }

/* tool items */
.i { width: 16px; height: 16px; flex: none; display: block; }
.t { display: flex; align-items: center; gap: 4px; margin-right: 7px; flex: none; white-space: nowrap; }
.off, .off span { color: #9a9a9a; }
.mr0 { margin-right: 0; } .mr2 { margin-right: 2px; } .mr3 { margin-right: 3px; } .mr4 { margin-right: 4px; } .mr5 { margin-right: 5px; } .mr6 { margin-right: 6px; } .mr7 { margin-right: 7px; } .mr8 { margin-right: 8px; } .mr9 { margin-right: 9px; } .mr53 { margin-right: 53px; }
.ml2 { margin-left: 2px; } .ml3 { margin-left: 3px; } .ml4 { margin-left: 4px; } .ml5 { margin-left: 5px; } .ml6 { margin-left: 6px; }
.d { flex: none; width: 0; height: 0; border-left: 3px solid transparent; border-right: 3px solid transparent; border-top: 3px solid #111; }
.d.mr6 { margin-right: 6px; } .d.mr7 { margin-right: 7px; } .d.mr8 { margin-right: 8px; }
.s { flex: none; width: 1px; height: 20px; background: #c4c4c4; margin-right: 5px; }
.g { flex: none; width: 2px; height: 16px; margin: 0 5px 0 2px; background: repeating-linear-gradient(to bottom, #9a9a9a 0 2px, transparent 2px 4px); }
.tb { display: flex; align-items: center; background: linear-gradient(#fff, #f4f4f4); flex: none; }
.active { border: 1px solid #3f97e6; background: #e8f2fb; padding: 0 3px; height: 25px; }
.active.fix { width: 75px; }

.toprow { display: flex; height: 32px; align-items: stretch; padding: 2px 0; }
.file-tb { display: flex; align-items: center; width: 153px; flex: none; padding-left: 4px; background: linear-gradient(#fff, #f4f4f4); margin-right: 0; }
.icon-open { margin-left: 8px; }
.tight { margin: 0 4px; }
.icon-save { margin-left: 4px; }
.sep-save { margin: 0 6px; height: 24px; }
.more-file { margin-left: 10px; margin-top: 4px; }
.tb-main { flex: 1; padding-left: 3px; }
.sigma { font: bold 14px/16px "Liberation Serif", serif; text-align: center; }
.threed { background: #fff; height: 26px; width: 49px; gap: 2px; margin-right: 3px; }
.tb-main > .threed + .d { margin-right: 6px; }
.more-end { margin-left: auto; margin-top: 4px; padding-right: 2px; }

/* body */
.body { display: flex; height: 624px; }
.left { width: 144px; flex: none; display: flex; flex-direction: column; padding-right: 4px; }
.nav-head { display: flex; align-items: center; height: 16px; background: #0b50df; color: #fff; padding-left: 1px; flex: none; font-size: 12.500px; }
.pin { width: 15px; height: 14px; margin-left: 36px; flex: none; }
.x { margin-left: 7px; font-family: "Liberation Sans", sans-serif; font-size: 11px; }
.nav-btn { height: 21px; line-height: 20px; text-align: center; background: #f2f2f2; border: 1px solid #aaa; margin: 1px 1px 0; flex: none; font-size: 12.500px; }
.tree-frame { flex: none; height: 516px; margin: 1px 0 0 2px; border: 1px solid #9a9a9a; background: #fff; display: flex; flex-direction: column; width: 136px; }
.tree-tools { height: 28px; background: #f4f4f4; display: flex; gap: 5px; align-items: center; padding-left: 4px; flex: none; margin-bottom: 0; }
.ti { width: 18px; height: 16px; }
.tree-mid { display: flex; height: 468px; flex: none; }
.tree { width: 117px; overflow: hidden; background: repeating-linear-gradient(to bottom, #888 0 1px, transparent 1px 2px) 12px 0 / 1px 100% no-repeat; }
.leaf, .grp { display: flex; align-items: center; height: 16px; white-space: nowrap; }
.leaf span, .grp span { font-size: 12px; }
.leaf .i { width: 15px; height: 15px; margin-right: 5px; }
.con { flex: none; width: 12px; height: 16px; margin-left: 31px; background: repeating-linear-gradient(to bottom, #777 0 1px, transparent 1px 2px) left top / 1px 100% no-repeat, repeating-linear-gradient(to right, #777 0 1px, transparent 1px 2px) left center / 100% 1px no-repeat; }
.con.last { background-size: 1px 50%, 100% 1px; }
.sel { background: linear-gradient(#d8d8d8, #d8d8d8) 40px 0 / 77px 100% no-repeat; }
.grp { background: #fff; }
.grp span { margin-left: 5px; }
.chev { flex: none; width: 7px; height: 7px; margin: 0 5px 2px 9px; border-right: 2px solid #444; border-bottom: 2px solid #444; transform: rotate(45deg) ; }
.chev.closed { border-color: #aaa; transform: rotate(-45deg); }
.fold { width: 16px; height: 13px; flex: none; }
.m { font-family: "Liberation Mono", monospace; font-size: 11px; letter-spacing: -.6px; }

/* scrollbars */
.vscroll { display: flex; flex-direction: column; align-items: center; background: #f0f0f0; flex: none; width: 16px; position: relative; }
.tree-v { width: 17px; }
.arr { height: 16px; line-height: 18px; font: 13px/18px "Liberation Sans", sans-serif; flex: none; color: #444; }
.thumb { background: #cdcdcd; width: 100%; flex: none; }
.tree-v .thumb { height: 247px; margin-top: 171px; }
.arr-d { margin-top: 8px; }
.hscroll { display: flex; align-items: center; height: 16px; background: #f0f0f0; flex: none; }
.harr { width: 16px; text-align: center; font: bold 14px/16px "Liberation Sans", sans-serif; color: #444; flex: none; }
.hthumb { display: block; height: 100%; background: #cdcdcd; flex: none; }
.tree-h { margin: 0; }
.tree-h .harr:first-child { margin-left: 1px; width: 18px; }
.tree-h .hthumb { width: 63px; }
.tree-h .harr-r { margin-left: auto; width: 32px; }
.grid-h .harr { width: 20px; }
.grid-h .hthumb { width: 828px; }
.grid-h .harr-r { margin-left: auto; width: 26px; }

/* right */
.right { flex: 1; min-width: 0; display: flex; flex-direction: column; }
.tb2 { height: 26px; width: 791px; margin-left: 2px; }
.row3 { display: flex; height: 28px; padding-top: 2px; align-items: stretch; }
.tb3 { width: 565px; margin-left: 2px; padding-left: 6px; height: 26px; }
.combo { display: flex; align-items: center; justify-content: space-between; background: #fff; height: 24px; padding: 0 5px 0 3px; flex: none; margin-right: 5px; white-space: nowrap; }
.combo .d { margin-left: 2px; }
.c1 { width: 56px; } .c2 { width: 67px; } .c3 { width: 66px; margin-right: 6px; } .c4 { width: 68px; margin-right: 6px; } .c5 { width: 55px; }
.s3 { margin-right: 6px; }
.tb3 .active, .tb5 .active { height: 26px; }
.tb3b { width: 422px; margin-left: 74px; height: 26px; }
.gb { margin: 0 4px; }
.row4 { display: flex; height: 30px; padding: 2px 0; }
.tb4 { width: 486px; margin-left: 2px; }
.tb4b { width: 30px; margin-left: 211px; }
.s4 { margin-right: 7px; }
.scene { display: block; width: 1222px; height: 251px; flex: none; background: #000; shape-rendering: crispEdges; }
.scene path, .scene circle { fill: none; }
.gn path { stroke: #008000; stroke-width: 1; }
.dr path { stroke: #800000; stroke-width: 1; }
.rd path { stroke: #ff0000; stroke-width: 1; }
.cir { shape-rendering: geometricPrecision; }
.cir circle, .cir path { stroke: #707070; stroke-width: 1; }
.oct circle { stroke: #0a7d0a; stroke-width: 1; }
.lbl text { fill: #c8c8c8; font: 15px "Liberation Sans", sans-serif; text-anchor: middle; }
.bar path { stroke: #a99f98; stroke-width: 2; }
.st path { stroke: #a99f98; stroke-width: 1; }
.wh path { stroke: #fff; stroke-width: 2; }
.dash { stroke: #a99f98; stroke-width: 2; stroke-dasharray: 34 14; }
.stub { stroke: #a99f98; stroke-width: 2; }
.dimt text { fill: #cfcfcf; font: 17px "Liberation Sans", sans-serif; text-anchor: middle; }
.gz-b { stroke: #1d84e6; stroke-width: 4; } .gz-bh { fill: #1d84e6 !important; }
.gz-g { stroke: #00e000; stroke-width: 4; } .gz-gh { fill: #00e000 !important; }
.gz-r { stroke: #f00; stroke-width: 4; } .gz-rh { fill: #f00 !important; }
.gizmo text { font: 14px "Liberation Sans", sans-serif; }
.tz { fill: #1d84e6; } .ty { fill: #00e000; } .tx { fill: #f00; }

.row5 { display: flex; height: 31px; padding-top: 2px; flex: none; }
.tb5 { height: 26px; width: 210px; margin-left: 2px; }
.tb5b { height: 26px; width: 408px; margin-left: 246px; }
.tb5b .g { margin-right: 3px; }
.c6 { width: 60px; margin-right: 2px; padding-right: 3px; }
.s5 { margin-right: 3px; }
.lab { color: #888; font-family: "Liberation Sans", sans-serif; flex: none; }
.spin { display: flex; align-items: center; justify-content: flex-end; height: 22px; border: 1px solid #8a8a8a; background: #f4f4f4; color: #888; font-family: "Liberation Sans", sans-serif; font-size: 13px; flex: none; margin-left: 3px; position: relative; padding-right: 15px; }
.up { position: absolute; right: 3px; top: 4px; width: 0; height: 0; border-left: 3px solid transparent; border-right: 3px solid transparent; border-bottom: 3px solid #333; }
.up::after { content: ""; position: absolute; left: -3px; top: 8px; border-left: 3px solid transparent; border-right: 3px solid transparent; border-top: 3px solid #333; }
.sp1 { width: 56px; } .sp2 { width: 58px; } .sp3 { width: 68px; margin-left: 4px; }
.s6 { margin: 0 3px 0 4px; }
.check { width: 11px; height: 11px; border: 1px solid #8a8a8a; background: #fff; flex: none; }
.rot { margin-left: 9px; flex: none; }

.zone { display: flex; flex: 1; min-height: 0; }
.strip { width: 11px; flex: none; padding: 2px 0 0 2px; background: repeating-linear-gradient(to bottom, #c8c8c8 0 2px, transparent 2px 4px) 4px 14px / 2px 234px no-repeat, repeating-linear-gradient(to bottom, #c8c8c8 0 2px, transparent 2px 4px) 8px 14px / 2px 234px no-repeat; }
.strip-x { display: block; width: 12px; height: 12px; }
.zone-main { flex: none; width: 1211px; display: flex; flex-direction: column; }
.tbg { height: 26px; width: 1205px; margin-left: 3px; margin-top: 2px; padding-left: 5px; }
.nv { width: 10px; height: 13px; flex: none; }
.gray { fill: #b4b4b4; } .blue { fill: #2f6fd8; }
.n2 { margin-left: 15px; } .n3 { margin-left: 13px; }
.s7 { margin: 0 6px 0 9px; }
.n4 { width: 11px; }
.n5 { width: 11px; margin-left: 12px; }
.s8 { margin: 0 4px 0 11px; }
.close { margin-right: 9px; flex: none; }
.s9 { margin-right: 6px; }
.total { flex: none; }
.gridframe { width: 1209px; height: 225px; margin-top: 1px; border: 1px solid #a0a0a0; background: #fff; flex: none; padding-left: 2px; }
.gridtop { display: flex; height: 208px; padding-top: 0; }
.gridview { width: 1189px; overflow: hidden; flex: none; }
.grid-v .thumb { height: 42px; }
.grid-v .arr { height: 19px; }
.grid-v .arr-d { margin-top: 134px; }
.grid-v { width: 16px; }
.grid-h { width: 1205px; height: 16px; }
table.rebar { table-layout: fixed; border-collapse: separate; border-spacing: 0; width: 1207px; font-size: 12px; }
.k0 { width: 33px; } .k1 { width: 73px; } .k2 { width: 56px; } .k3 { width: 36px; } .k4 { width: 33px; } .k5 { width: 201px; } .k6 { width: 166px; } .k7 { width: 156px; } .k8 { width: 61px; } .k9 { width: 38px; } .k10 { width: 39px; } .k11 { width: 49px; } .k12 { width: 61px; } .k13 { width: 60px; } .k14 { width: 71px; } .k15 { width: 74px; }
.rebar th { height: 19px; padding: 0; font-weight: normal; text-align: center; background: linear-gradient(#fff, #ededed); border-right: 1px solid #b6b6b6; border-bottom: 1px solid #b6b6b6; white-space: nowrap; overflow: hidden; }
.rebar td { background: #ccffd6; padding: 0 0 0 2px; border-right: 1px solid #b6b6b6; border-bottom: 1px solid #b6b6b6; white-space: nowrap; overflow: hidden; }
.rebar th.hot { background: linear-gradient(#fbdb9c, #f6bd5e); color: #7a0f8a; }
.rebar td.thick { border-right: 1px solid #000; }
.rebar th.thick { border-right: 1px solid #b6b6b6; }
.rebar td.no { background: linear-gradient(#fff, #ededed); text-align: center; padding: 0; font-family: "Liberation Mono", monospace; font-size: 11px; }
.rebar td.cur { background: #ffd27f; color: #6a1a6a; }
.rebar td.desc { background: #b3f0df; }
.rebar td.ctr { text-align: center; padding: 0; text-decoration: underline; }
.rebar td.fig { padding: 0; }
.h1 td { height: 29px; } .h2 td { height: 58px; } .h3 td { height: 62px; } .h4 td { height: 62px; vertical-align: top; padding-top: 19px; }
.rebar .h4 td { padding-top: 19px; }
.rebar .h4 td.fig { padding-top: 0; }
.fig svg { display: block; width: 200px; height: 100%; overflow: hidden; }
.h1 .fig svg { height: 28px; } .h2 .fig svg { height: 57px; } .h3 .fig svg { height: 61px; } .h4 .fig svg { height: 61px; }
.rb { fill: none; stroke: #000; stroke-width: 2; }
.thinr { stroke-width: 1; }
.fig text { font: 11px "Liberation Mono", monospace; fill: #223; letter-spacing: -.6px; }

/* status */
.status { display: flex; height: 20px; gap: 3px; flex: none; background: #f0f0f0; }
.status span { display: block; height: 19px; background: #f8f8f8; border: 1px solid #d4d4d4; line-height: 17px; padding-left: 1px; white-space: nowrap; flex: none; }
.status .st1, .status .st4, .status .st6 { font: 11px/17px "Liberation Mono", monospace; letter-spacing: -.6px; }
.st1 { width: 148px; } .st2 { width: 76px; } .st3 { width: 97px; } .st4 { width: 47px; } .st5 { width: 914px; } .st6 { width: 70px; }

/* taskbar */
.taskbar { display: flex; height: 40px; background: #03090d; flex: none; color: #eee; }
.start { width: 48px; background: #000; display: flex; align-items: center; justify-content: center; flex: none; }
.start svg { width: 16px; height: 16px; }
.search { width: 344px; flex: none; background: #333; display: flex; align-items: center; padding-left: 10px; color: #8a8a8a; font-size: 14px; }
.cortana { width: 20px; height: 20px; flex: none; }
.search span { margin-left: 6px; }
.mic { width: 12px; height: 18px; margin-left: auto; margin-right: 14px; }
.apps { display: flex; width: 666px; flex: none; padding-left: 2px; }
.app-i { width: 49px; height: 40px; display: flex; align-items: center; justify-content: center; flex: none; position: relative; }
.app-i:nth-child(2) { margin-left: 3px; }
.app-i:nth-child(3) { margin-left: 2px; }
.app-i svg { width: 24px; height: 24px; }
.open { box-shadow: inset 0 -2px 0 #76b9ed; background-clip: content-box; border-left: 4px solid #03090d; border-right: 4px solid #03090d; }
.open { box-shadow: none; background: linear-gradient(#76b9ed, #76b9ed) center bottom / 100% 2px no-repeat; background-clip: padding-box; }
.active-app { background: linear-gradient(#76b9ed, #76b9ed) center bottom / 100% 2px no-repeat, #2d3a40; border: 0; }
.tray { flex: 1; display: flex; align-items: center; padding-left: 0; min-width: 0; }
.tr-a { width: 14px; height: 8px; margin-right: 11px; }
.tr-b, .tr-c, .tr-d { width: 16px; height: 16px; }
.tr-b { margin-right: 9px; } .tr-c { margin-right: 6px; } .tr-d { margin-right: 9px; }
.tr-e { width: 23px; height: 16px; margin-right: 8px; }
.tr-f { font-size: 14px; font-weight: bold; margin-right: 13px; }
.tr-g { width: 16px; height: 18px; margin-right: 18px; }
.clock { display: flex; flex-direction: column; align-items: center; width: 60px; font-size: 12.500px; line-height: 19px; margin-right: 16px; }
.clock span:first-child { padding-left: 4px; }
.tr-h { width: 18px; height: 18px; }

/* floats */
.badge { position: absolute; left: 593px; top: -21px; width: 39px; height: 39px; border-radius: 50%; background: #35ae4b; box-shadow: 0 1px 2px 1px #9a9a9a; color: #fff; font: bold 12px "Liberation Sans", sans-serif; display: flex; align-items: flex-end; justify-content: center; padding-bottom: 4px; }
.ime { position: absolute; left: 612px; top: 37px; display: flex; align-items: center; height: 25px; }
.ime-s { width: 28px; height: 25px; flex: none; position: relative; }
.ime-body { display: flex; align-items: center; width: 156px; height: 22px; background: linear-gradient(#fff, #e6f0fb); border: 1px solid #b7d3ee; border-left: 0; padding-left: 5px; }
.ime-en { color: #1f76d6; font-weight: bold; font-size: 14px; width: 22px; }
.ime-dot { color: #1f76d6; font-weight: bold; width: 21px; font-family: "Liberation Sans", sans-serif; }
.ime-i { width: 15px; height: 15px; margin-right: 7px; flex: none; }
```
